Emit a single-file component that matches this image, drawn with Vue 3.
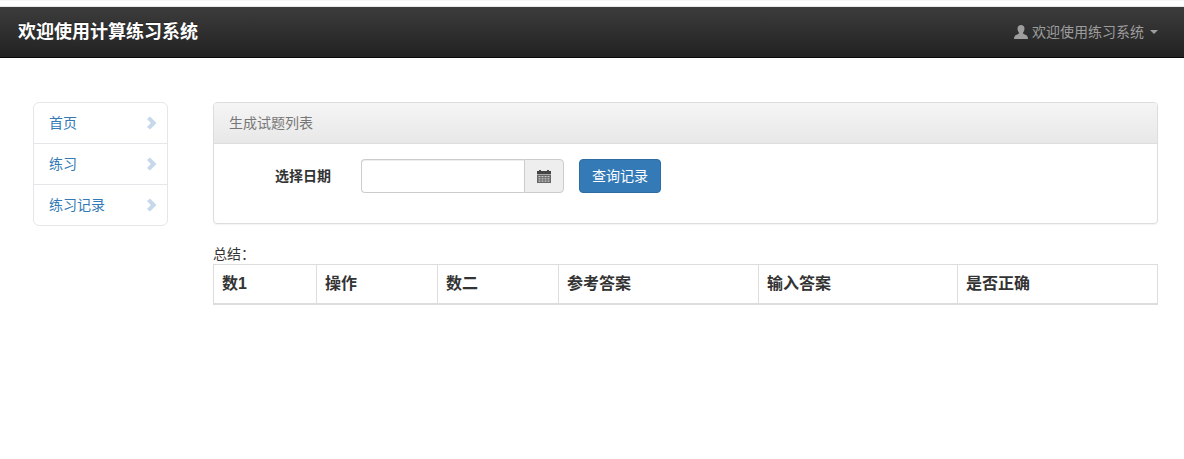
<script setup>
const menu = ['首页', '练习', '练习记录']
const cols = [
  { t: '数1', w: 103 },
  { t: '操作', w: 121 },
  { t: '数二', w: 121 },
  { t: '参考答案', w: 200 },
  { t: '输入答案', w: 199 },
  { t: '是否正确', w: 200 }
]
</script>

<template>
  <div class="page">
    <header class="navbar">
      <div class="brand">欢迎使用计算练习系统</div>
      <div class="user">
        <svg class="user-icon" viewBox="0 0 14 14" width="14" height="14">
          <path d="M0 14c0-3 1.2-4 3.2-4.600 1-.3 1.800-.7 1.800-1.400 0-.5-.5-.9-.9-1.700C3.700 5.400 3.500 4.500 3.500 3.500 3.500 1.300 5 0 7 0s3.500 1.300 3.500 3.500c0 1-.2 1.900-.6 2.800-.4.800-.9 1.200-.9 1.700 0 .7.800 1.100 1.800 1.400 2 .6 3.200 1.600 3.200 4.600z" fill="currentColor"/>
        </svg>
        <span>欢迎使用练习系统</span>
        <i class="caret"></i>
      </div>
    </header>
    <main class="content">
      <nav class="side">
        <a v-for="m in menu" :key="m" class="side-item">
          <span class="side-text">{{ m }}</span>
          <svg viewBox="0 0 10 14" width="10" height="14"><path d="M0 3 L3 0.500 L9.500 7 L3 13.500 L0 11 L3.800 7 Z" fill="#c6d9ec"/></svg>
        </a>
      </nav>
      <section class="main">
        <div class="panel">
          <div class="panel-heading">生成试题列表</div>
          <div class="panel-body">
            <label class="label">选择日期</label>
            <div class="group">
              <div class="input"></div>
              <div class="addon">
                <svg viewBox="0 0 14 14" width="14" height="14">
                  <path d="M0 2h2V1h2v1h6V1h2v1h2v3H0z" fill="#444"/>
                  <path d="M0 5.500h14V14H0z" fill="#666"/>
                  <path d="M1.500 7h2v1.200h-2zm3 0h2v1.200h-2zm3 0h2v1.200h-2zm3 0h2v1.200h-2zM1.500 9.300h2v1.200h-2zm3 0h2v1.200h-2zm3 0h2v1.200h-2zm3 0h2v1.200h-2zM1.500 11.500h2v1.200h-2zm3 0h2v1.200h-2zm3 0h2v1.200h-2zm3 0h2v1.200h-2z" fill="#c9c9c9"/>
                </svg>
              </div>
            </div>
            <button class="btn">查询记录</button>
          </div>
        </div>
        <div class="summary">总结：</div>
        <table class="table">
          <thead>
            <tr>
              <th v-for="c in cols" :key="c.t" :style="{ width: c.w + 'px' }">{{ c.t }}</th>
            </tr>
          </thead>
        </table>
      </section>
    </main>
  </div>
</template>

<style>
html, body { margin: 0; background: #fff; }
</style>

<style scoped>
.page {
  font-family: "Liberation Sans", "Noto Sans CJK SC", sans-serif;
  font-size: 14px;
  color: #333;
  border-top: 1px solid #f6f6f6;
  padding-top: 5px;
  height: 453px;
  overflow: hidden;
}
.navbar {
  height: 50px;
  border-top: 1px solid #e7e7e7;
  border-bottom: 1px solid #080808;
  background: linear-gradient(to bottom, #3c3c3c, #222);
  display: flex;
  align-items: center;
  justify-content: space-between;
  padding: 0 26px 0 18px;
}
.brand {
  font-size: 18px;
  line-height: 20px;
  font-weight: bold;
  color: #fff;
  text-shadow: 0 -1px 0 rgba(0, 0, 0, .25);
}
.user {
  display: flex;
  align-items: center;
  color: #9d9d9d;
  font-size: 14px;
  line-height: 20px;
}
.user-icon { margin-right: 4px; }
.caret {
  width: 0;
  height: 0;
  margin-left: 6px;
  border-top: 4px solid #9d9d9d;
  border-left: 4px solid transparent;
  border-right: 4px solid transparent;
}
.content {
  display: flex;
  align-items: flex-start;
  padding: 44px 26px 0 33px;
}
.side {
  width: 135px;
  box-sizing: border-box;
  border: 1px solid #e4e6ea;
  border-radius: 6px;
  margin-right: 45px;
  flex: none;
}
.side-item {
  display: flex;
  align-items: center;
  justify-content: space-between;
  height: 40px;
  padding: 0 10px 0 15px;
  color: #337ab7;
  font-size: 14px;
  border-top: 1px solid #e4e6ea;
}
.side-text { margin-top: -2px; }
.side-item:first-child { border-top: 0; }
.main { flex: 1; min-width: 0; }
.panel {
  border: 1px solid #ddd;
  border-radius: 4px;
  box-shadow: 0 1px 1px rgba(0, 0, 0, .05);
  height: 122px;
  box-sizing: border-box;
}
.panel-heading {
  height: 41px;
  box-sizing: border-box;
  border-bottom: 1px solid #ddd;
  border-radius: 3px 3px 0 0;
  background: linear-gradient(to bottom, #f5f5f5, #e8e8e8);
  color: #777;
  font-size: 14px;
  line-height: 40px;
  padding-left: 15px;
}
.panel-body {
  display: flex;
  align-items: center;
  padding: 15px 0 0 61px;
}
.label {
  width: 86px;
  font-size: 14px;
  font-weight: bold;
  margin-top: -2px;
}
.group { display: flex; height: 34px; }
.input {
  width: 163px;
  box-sizing: border-box;
  border: 1px solid #ccc;
  border-right: 0;
  border-radius: 4px 0 0 4px;
  box-shadow: inset 0 1px 1px rgba(0, 0, 0, .075);
}
.addon {
  width: 40px;
  box-sizing: border-box;
  border: 1px solid #ccc;
  border-radius: 0 4px 4px 0;
  background: #eee;
  display: flex;
  align-items: center;
  justify-content: center;
}
.btn {
  margin-left: 15px;
  width: 82px;
  height: 34px;
  box-sizing: border-box;
  border: 1px solid #2e6da4;
  border-radius: 4px;
  background: #337ab7;
  color: #fff;
  font: 14px/20px "Liberation Sans", "Noto Sans CJK SC", sans-serif;
  padding: 0;
}
.summary {
  margin-top: 21px;
  height: 19px;
  line-height: 19px;
  font-size: 14px;
}
.table {
  width: 944px;
  table-layout: fixed;
  border-collapse: collapse;
  border: 1px solid #ddd;
}
.table th {
  height: 39px;
  box-sizing: border-box;
  border: 1px solid #ddd;
  border-bottom: 2px solid #ddd;
  padding: 0 8px 4px;
  text-align: left;
  font-size: 16px;
  font-weight: bold;
}
</style>
